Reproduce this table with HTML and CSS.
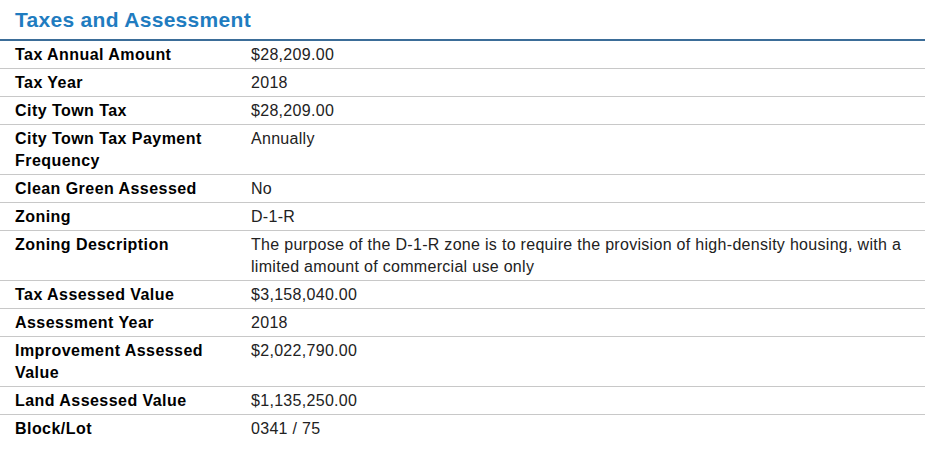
FILE: index.html
```html
<!DOCTYPE html>
<html lang="en">
<head>
<meta charset="utf-8">
<title>Taxes and Assessment</title>
<link rel="stylesheet" href="styles.css">
</head>
<body>
<section class="panel">
  <h2 class="title">Taxes and Assessment</h2>
  <div class="table">
    <div class="row"><div class="label">Tax Annual Amount</div><div class="value">$28,209.00</div></div>
    <div class="row"><div class="label">Tax Year</div><div class="value">2018</div></div>
    <div class="row"><div class="label">City Town Tax</div><div class="value">$28,209.00</div></div>
    <div class="row"><div class="label">City Town Tax Payment Frequency</div><div class="value">Annually</div></div>
    <div class="row"><div class="label">Clean Green Assessed</div><div class="value">No</div></div>
    <div class="row"><div class="label">Zoning</div><div class="value">D-1-R</div></div>
    <div class="row"><div class="label">Zoning Description</div><div class="value">The purpose of the D-1-R zone is to require the provision of high-density housing, with a limited amount of commercial use only</div></div>
    <div class="row"><div class="label">Tax Assessed Value</div><div class="value">$3,158,040.00</div></div>
    <div class="row"><div class="label">Assessment Year</div><div class="value">2018</div></div>
    <div class="row"><div class="label">Improvement Assessed Value</div><div class="value">$2,022,790.00</div></div>
    <div class="row"><div class="label">Land Assessed Value</div><div class="value">$1,135,250.00</div></div>
    <div class="row last"><div class="label">Block/Lot</div><div class="value">0341 / 75</div></div>
  </div>
</section>
</body>
</html>
```

FILE: styles.css
```css
* { box-sizing: border-box; }
body {
  margin: 0;
  background: #fff;
  font-family: "Liberation Sans", Arial, sans-serif;
  color: #1a1a1a;
}
.panel {
  width: 925px;
}
.title {
  margin: 0;
  padding: 7px 15px 0 15px;
  height: 41px;
  font-size: 21px;
  line-height: 26px;
  font-weight: bold;
  letter-spacing: 0.3px;
  color: #1f7cc0;
  border-bottom: 2px solid #3b6d98;
}
.table {
  display: flex;
  flex-direction: column;
}
.row {
  display: grid;
  grid-template-columns: 251px 1fr;
  border-bottom: 1px solid #c8c8c8;
  padding: 3px 0 2px 0;
  font-size: 16px;
  line-height: 22px;
}
.row.last { border-bottom: none; }
.label {
  padding-left: 15px;
  padding-right: 16px;
  font-weight: bold;
  letter-spacing: 0.45px;
  color: #000;
}
.value {
  padding-right: 15px;
  letter-spacing: 0.3px;
  color: #222;
}
```
